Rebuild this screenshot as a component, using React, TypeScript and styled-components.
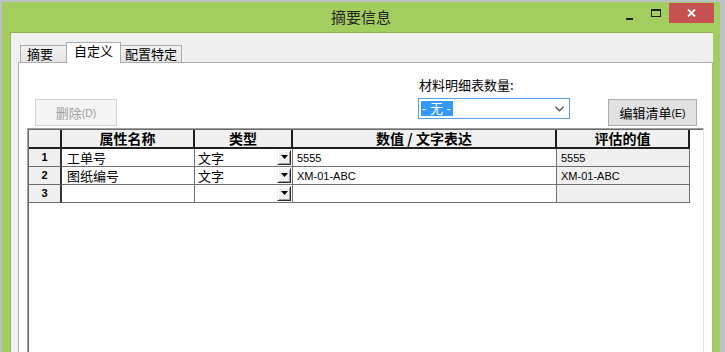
import React from "react";
import styled, { createGlobalStyle } from "styled-components";

const GlobalStyle = createGlobalStyle`
  html, body {
    margin: 0;
    padding: 0;
    background: #bcc1c7;
  }
  body {
    font-family: "Noto Sans CJK SC", "Liberation Sans", sans-serif;
    font-size: 13px;
    color: #000;
  }
  * { box-sizing: border-box; }
`;

const Desktop = styled.div`
  width: 725px;
  height: 352px;
  overflow: hidden;
  padding: 2px 5px 0 2px;
  background: #bcc1c7;
`;

const Window = styled.div`
  height: 380px;
  display: flex;
  flex-direction: column;
  background: #a2cd5f;
`;

const TitleBar = styled.div`
  height: 30px;
  display: grid;
  grid-template-columns: 1fr auto 1fr;
  align-items: start;
`;

const Title = styled.div`
  grid-column: 2;
  font-size: 15px;
  line-height: 30px;
  color: #262626;
`;

const Controls = styled.div`
  grid-column: 3;
  justify-self: end;
  display: flex;
  margin: 1px 6px 0 0;
`;

const CtrlButton = styled.div<{ $w: number; $danger?: boolean }>`
  width: ${(p) => p.$w}px;
  height: 20px;
  display: flex;
  align-items: center;
  justify-content: center;
  background: ${(p) => (p.$danger ? "#c75050" : "transparent")};
`;

const MinBar = styled.div`
  width: 7px;
  height: 2px;
  margin-top: 12px;
  background: #1e1e1e;
`;

const MaxBox = styled.div`
  width: 10px;
  height: 8px;
  margin-top: -1px;
  border: 1px solid #1e1e1e;
  border-top-width: 2px;
`;

const Client = styled.div`
  flex: 1;
  margin: 0 7px 0 8px;
  background: #f0f0f0;
  border-top: 1px solid #8db153;
  border-left: 1px solid #8db153;
  padding: 9px 0 0 7px;
  display: flex;
  flex-direction: column;
`;

const TabStrip = styled.div`
  height: 21px;
  margin-bottom: -1px;
  padding-left: 2px;
  display: flex;
  align-items: flex-end;
`;

const Tab = styled.div<{ $w: number; $pad: number; $active?: boolean }>`
  width: ${(p) => p.$w}px;
  height: ${(p) => (p.$active ? 21 : 17)}px;
  margin-bottom: ${(p) => (p.$active ? 0 : 1)}px;
  margin-left: -1px;
  padding-left: ${(p) => p.$pad}px;
  border: 1px solid #acacac;
  border-bottom: none;
  background: ${(p) => (p.$active ? "#ffffff" : "linear-gradient(#f2f2f2, #e5e5e5)")};
  font-size: 13px;
  line-height: ${(p) => (p.$active ? 16 : 15)}px;
  white-space: nowrap;
  position: ${(p) => (p.$active ? "relative" : "static")};
  z-index: ${(p) => (p.$active ? 1 : "auto")};
  &:first-child { margin-left: 0; }
`;

const Panel = styled.div`
  flex: 1;
  background: #ffffff;
  border: 1px solid #adadad;
  padding: 0 8px 0 8px;
  display: flex;
  flex-direction: column;
`;

const Toolbar = styled.div`
  height: 65px;
  display: flex;
  align-items: flex-start;
`;

const Button = styled.div<{ $w: number; $disabled?: boolean }>`
  width: ${(p) => p.$w}px;
  height: 27px;
  margin-top: 36px;
  display: flex;
  align-items: center;
  justify-content: center;
  border: 1px solid ${(p) => (p.$disabled ? "#d5d5d5" : "#adadad")};
  background: ${(p) => (p.$disabled ? "#f4f4f4" : "#e1e1e1")};
  color: ${(p) => (p.$disabled ? "#a0a0a0" : "#000")};
  font-size: 13px;
  line-height: 16px;
`;

const DeleteButton = styled(Button)`
  margin-left: 8px;
`;

const Accel = styled.span`
  font-family: "Liberation Sans", sans-serif;
  font-size: 10.5px;
`;

const CountGroup = styled.div`
  margin: 14px 0 0 auto;
  display: flex;
  flex-direction: column;
`;

const Label = styled.div`
  padding-left: 1px;
  font-size: 13px;
  line-height: 16px;
  height: 16px;
`;

const Select = styled.div`
  width: 152px;
  height: 21px;
  margin-top: 5px;
  border: 1px solid #569de5;
  background: #fff;
  display: flex;
  align-items: center;
  justify-content: space-between;
  padding: 0 5px 0 2px;
`;

const Highlight = styled.span`
  background: #3399ff;
  color: #fff;
  font-family: "Liberation Sans", "Noto Sans CJK SC", sans-serif;
  font-size: 13px;
  line-height: 15px;
  padding: 0 2px 0 1px;
  white-space: pre;
`;

const EditButton = styled(Button)`
  margin-left: 38px;
  margin-right: 7px;
`;

const Grid = styled.div`
  flex: 1;
  background: #fff;
  border-top: 1px solid #a0a0a0;
  border-left: 1px solid #a0a0a0;
  border-right: 1px solid #e3e3e3;
  box-shadow: inset 1px 1px 0 #696969;
  padding: 1px 0 0 1px;
`;

const Table = styled.div`
  display: grid;
  grid-template-columns: 33px 133px 98px 264px 133px;
`;

const HeadCell = styled.div`
  height: 19px;
  background: #f0f0f0;
  border-right: 2px solid #1f1f1f;
  border-bottom: 2px solid #1f1f1f;
  font-size: 14px;
  font-weight: 700;
  line-height: 17px;
  text-align: center;
  white-space: nowrap;
`;

const RowHead = styled.div`
  height: 18px;
  background: #f0f0f0;
  border-right: 2px solid #333;
  border-bottom: 1px solid #6a6a6a;
  font-family: "Liberation Sans", sans-serif;
  font-size: 11px;
  font-weight: 700;
  line-height: 17px;
  text-align: center;
`;

const Cell = styled.div<{ $readonly?: boolean; $latin?: boolean }>`
  height: 18px;
  background: ${(p) => (p.$readonly ? "#f0f0f0" : "#fff")};
  border-right: 1px solid #707070;
  border-bottom: 1px solid #707070;
  display: flex;
  align-items: center;
  justify-content: space-between;
  padding-left: ${(p) => (p.$latin ? 4 : 5)}px;
  font-family: ${(p) =>
    p.$latin ? `"Liberation Sans", sans-serif` : `"Noto Sans CJK SC", sans-serif`};
  font-size: ${(p) => (p.$latin ? 11 : 13)}px;
  white-space: nowrap;
`;

const TypeCell = styled(Cell)`
  padding-left: 3px;
`;

const DropButton = styled.div`
  width: 14px;
  height: 15px;
  margin: -1px 1px 0 0;
  background: #f0f0f0;
  border: 1px solid;
  border-color: #f0f0f0 #2a2a2a #2a2a2a #f0f0f0;
  box-shadow: inset 1px 1px 0 #fff, inset -1px -1px 0 #a0a0a0;
  display: flex;
  align-items: center;
  justify-content: center;
`;

const rows = [
  { n: 1, name: "工单号", type: "文字", value: "5555", result: "5555" },
  { n: 2, name: "图纸编号", type: "文字", value: "XM-01-ABC", result: "XM-01-ABC" },
  { n: 3, name: "", type: "", value: "", result: "" },
];

function Caret() {
  return (
    <svg width="7" height="4" viewBox="0 0 7 4">
      <polygon points="0,0 7,0 3.5,4" fill="#000" />
    </svg>
  );
}

export default function App() {
  return (
    <>
      <GlobalStyle />
      <Desktop>
        <Window>
          <TitleBar>
            <Title>摘要信息</Title>
            <Controls>
              <CtrlButton $w={26}>
                <MinBar />
              </CtrlButton>
              <CtrlButton $w={27}>
                <MaxBox />
              </CtrlButton>
              <CtrlButton $w={45} $danger>
                <svg width="9" height="8" viewBox="0 0 9 8">
                  <path d="M1 0.5 L8 7.5 M8 0.5 L1 7.5" stroke="#fff" strokeWidth="1.8" />
                </svg>
              </CtrlButton>
            </Controls>
          </TitleBar>
          <Client>
            <TabStrip>
              <Tab $w={47} $pad={6}>摘要</Tab>
              <Tab $w={55} $pad={7} $active>自定义</Tab>
              <Tab $w={62} $pad={4}>配置特定</Tab>
            </TabStrip>
            <Panel>
              <Toolbar>
                <DeleteButton $w={82} $disabled>
                  删除<Accel>(D)</Accel>
                </DeleteButton>
                <CountGroup>
                  <Label>材料明细表数量:</Label>
                  <Select>
                    <Highlight>- 无 -</Highlight>
                    <svg width="9" height="6" viewBox="0 0 9 6">
                      <polyline points="0.5,0.8 4.5,4.8 8.5,0.8" fill="none" stroke="#555" strokeWidth="1.4" />
                    </svg>
                  </Select>
                </CountGroup>
                <EditButton $w={89}>
                  编辑清单<Accel>(E)</Accel>
                </EditButton>
              </Toolbar>
              <Grid>
                <Table>
                  <HeadCell />
                  <HeadCell>属性名称</HeadCell>
                  <HeadCell>类型</HeadCell>
                  <HeadCell>数值 / 文字表达</HeadCell>
                  <HeadCell>评估的值</HeadCell>
                  {rows.map((r) => (
                    <React.Fragment key={r.n}>
                      <RowHead>{r.n}</RowHead>
                      <Cell>{r.name}</Cell>
                      <TypeCell>
                        <span>{r.type}</span>
                        <DropButton>
                          <Caret />
                        </DropButton>
                      </TypeCell>
                      <Cell $latin>{r.value}</Cell>
                      <Cell $latin $readonly>{r.result}</Cell>
                    </React.Fragment>
                  ))}
                </Table>
              </Grid>
            </Panel>
          </Client>
        </Window>
      </Desktop>
    </>
  );
}
